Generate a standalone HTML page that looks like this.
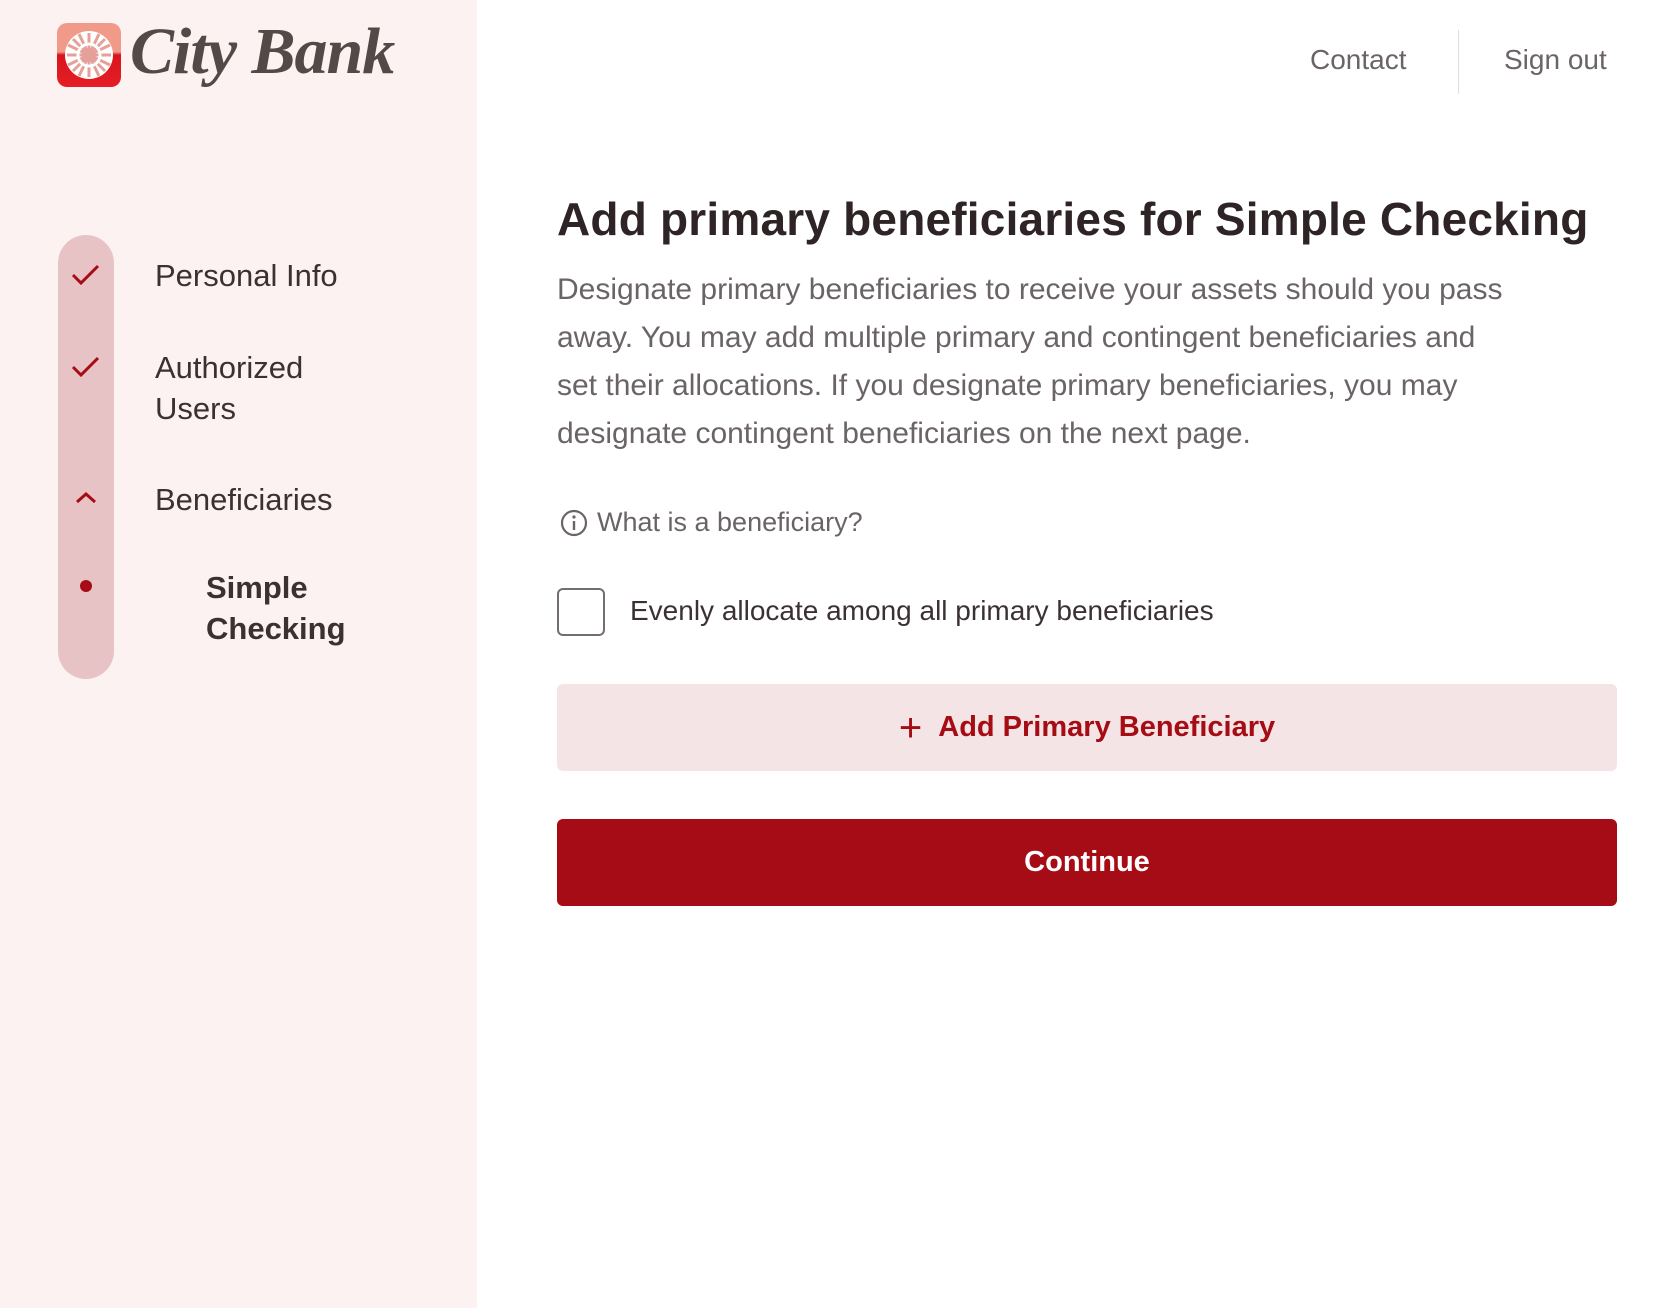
<!DOCTYPE html>
<html><head><meta charset="utf-8"><style>
*{margin:0;padding:0;box-sizing:border-box}
body{width:1670px;height:1308px;background:#fff;font-family:"Liberation Sans",sans-serif;color:#3b3133;position:relative;overflow:hidden}
.side{position:absolute;left:0;top:0;width:477px;height:1308px;background:#fcf2f1}
.logo{position:absolute;left:57px;top:23px;width:64px;height:64px;border-radius:10px;background:linear-gradient(#f29a8a 0,#f29a8a 45%,#d8141c 50%,#e51e25 100%);overflow:hidden}
.brand{position:absolute;left:130px;top:14px;font-family:"Liberation Serif",serif;font-style:italic;font-weight:bold;font-size:66px;color:#534a48;letter-spacing:-1px}
.pill{position:absolute;left:58px;top:235px;width:56px;height:444px;border-radius:28px;background:#e8c3c5}
.nav{position:absolute;font-size:31px;color:#3b3133;line-height:41px}
.top{position:absolute;top:44px;font-size:28px;color:#6b6466}
.div{position:absolute;left:1458px;top:30px;width:1px;height:64px;background:#e2dcdc}
h1{position:absolute;left:557px;top:192px;font-size:46px;font-weight:bold;color:#2e2426;letter-spacing:0.2px}
.p{position:absolute;left:557px;top:266px;width:958px;font-size:30px;line-height:48px;color:#6b6466}
.q{position:absolute;left:597px;top:507px;font-size:27px;color:#6b6466}
.cb{position:absolute;left:557px;top:588px;width:48px;height:48px;border:2px solid #756e70;border-radius:6px}
.lab{position:absolute;left:630px;top:595px;font-size:28px;color:#3b3133}
.btn{position:absolute;left:557px;width:1060px;height:87px;border-radius:6px;display:flex;align-items:center;justify-content:center;font-size:29px;font-weight:bold}
</style></head><body>
<div class="side">
 <div class="logo"><svg width="64" height="64" viewBox="0 0 64 64"><circle cx="32" cy="32" r="24" fill="#fff"/><g stroke="#e5a09a" stroke-width="3"><line x1="32" y1="10" x2="32" y2="54"/><line x1="10" y1="32" x2="54" y2="32"/><line x1="16" y1="16" x2="48" y2="48"/><line x1="48" y1="16" x2="16" y2="48"/><line x1="22" y1="11" x2="42" y2="53"/><line x1="42" y1="11" x2="22" y2="53"/><line x1="11" y1="22" x2="53" y2="42"/><line x1="53" y1="22" x2="11" y2="42"/></g><circle cx="32" cy="32" r="11" fill="none" stroke="#fff" stroke-width="3"/></svg></div>
 <div class="brand">City Bank</div>
 <div class="pill"></div>
 <svg style="position:absolute;left:70px;top:262px" width="32" height="26" viewBox="0 0 32 26"><path d="M3 13 L11 21 L28 4" fill="none" stroke="#a60c15" stroke-width="3"/></svg>
 <svg style="position:absolute;left:70px;top:354px" width="32" height="26" viewBox="0 0 32 26"><path d="M3 13 L11 21 L28 4" fill="none" stroke="#a60c15" stroke-width="3"/></svg>
 <svg style="position:absolute;left:74px;top:490px" width="24" height="16" viewBox="0 0 24 16"><path d="M3 12 L12 4 L21 12" fill="none" stroke="#a60c15" stroke-width="3"/></svg>
 <div style="position:absolute;left:80px;top:580px;width:12px;height:12px;border-radius:50%;background:#a60c15"></div>
 <div class="nav" style="left:155px;top:255px">Personal Info</div>
 <div class="nav" style="left:155px;top:347px">Authorized<br>Users</div>
 <div class="nav" style="left:155px;top:479px">Beneficiaries</div>
 <div class="nav" style="left:206px;top:567px;font-weight:bold">Simple<br>Checking</div>
</div>
<div class="top" style="left:1310px">Contact</div>
<div class="div"></div>
<div class="top" style="left:1504px">Sign out</div>
<h1>Add primary beneficiaries for Simple Checking</h1>
<div class="p">Designate primary beneficiaries to receive your assets should you pass away. You may add multiple primary and contingent beneficiaries and set their allocations. If you designate primary beneficiaries, you may designate contingent beneficiaries on the next page.</div>
<svg style="position:absolute;left:559px;top:508px" width="30" height="30" viewBox="0 0 30 30"><circle cx="15" cy="15" r="12" fill="none" stroke="#6b6466" stroke-width="2.2"/><line x1="15" y1="13" x2="15" y2="22" stroke="#6b6466" stroke-width="2.4"/><circle cx="15" cy="9" r="1.6" fill="#6b6466"/></svg>
<div class="q">What is a beneficiary?</div>
<div class="cb"></div>
<div class="lab">Evenly allocate among all primary beneficiaries</div>
<div class="btn" style="top:684px;background:#f5e4e6;color:#a50c14"><span style="font-weight:normal;font-size:40px;margin-right:16px;line-height:1">+</span>Add Primary Beneficiary</div>
<div class="btn" style="top:819px;background:#a60c15;color:#fff">Continue</div>
</body></html>
